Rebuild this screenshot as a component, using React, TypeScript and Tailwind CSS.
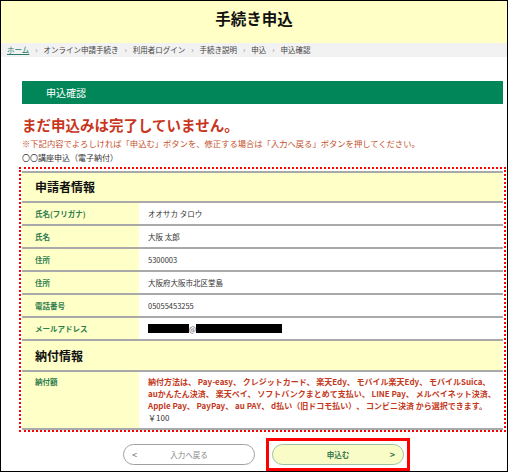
const rows = [
  { label: "氏名(フリガナ)", value: "オオサカ タロウ" },
  { label: "氏名", value: "大阪 太郎" },
  { label: "住所", value: "5300003" },
  { label: "住所", value: "大阪府大阪市北区堂島" },
  { label: "電話番号", value: "05055453255" },
];

const crumbs = ["オンライン申請手続き", "利用者ログイン", "手続き説明", "申込", "申込確認"];

function Row({ label, children }: { label: string; children: React.ReactNode }) {
  return (
    <div className="grid grid-cols-[117px_1fr] border-t-2 border-[#a9a9a9] h-[23px]">
      <div className="bg-[#ffffc8] pl-[13px] flex items-center text-[7.5px] font-bold text-[#2e7d4f]">
        {label}
      </div>
      <div className="bg-white pl-[9px] flex items-center text-[7.5px] text-[#333]">{children}</div>
    </div>
  );
}

export default function App() {
  return (
    <div className="w-[508px] h-[472px] border border-black bg-white overflow-hidden font-['Noto_Sans_CJK_JP',sans-serif]">
      {/* Header */}
      <div className="h-[42px] bg-[#ffffc6] flex justify-center pt-[6px]">
        <h1 className="text-[15.5px] font-bold text-[#111] leading-[22px]">手続き申込</h1>
      </div>

      {/* Breadcrumb */}
      <div className="h-[14px] bg-[#f2f2f2] flex items-center pl-[6px] text-[7.5px] text-[#444] leading-none">
        <span className="text-[#2a7a6a] underline">ホーム</span>
        {crumbs.map((c) => (
          <span key={c} className="flex items-center">
            <span className="mx-[6px] text-[#888]">›</span>
            {c}
          </span>
        ))}
      </div>

      <div className="ml-[21px] mr-[4px]">
        {/* Section bar */}
        <div className="mt-[24px] h-[23px] bg-[#008658] flex items-center pl-[24px] text-white text-[10px]">
          申込確認
        </div>

        <h2 className="mt-[11px] h-[20px] leading-[20px] text-[14.5px] font-bold text-[#c8361c]">
          まだ申込みは完了していません。
        </h2>
        <p className="mt-[2px] leading-[12px] text-[8.3px] text-[#c4502c] whitespace-nowrap">
          ※下記内容でよろしければ「申込む」ボタンを、修正する場合は「入力へ戻る」ボタンを押してください。
        </p>
        <p className="mt-[3px] leading-[12px] text-[8px] text-[#333]">〇〇講座申込（電子納付）</p>

        {/* Dotted box */}
        <div className="mt-[3px] -mx-[3px] border-2 border-dotted border-[#ff0000] px-[1px] pt-[2px]">
          <div className="border-t-2 border-[#a9a9a9] h-[30px] bg-[#ffffc8] flex items-center pl-[13px] text-[12px] font-bold text-[#111]">
            申請者情報
          </div>
          {rows.map((r, i) => (
            <Row key={i} label={r.label}>
              {r.value}
            </Row>
          ))}
          <Row label="メールアドレス">
            <span className="inline-block w-[41px] h-[9px] bg-black" />
            <span className="text-[#555]">@</span>
            <span className="inline-block w-[86px] h-[9px] bg-black" />
          </Row>

          <div className="border-t-2 border-[#a9a9a9] h-[31px] bg-[#ffffc8] flex items-center pl-[13px] text-[12px] font-bold text-[#111]">
            納付情報
          </div>
          <div className="grid grid-cols-[117px_1fr] border-t-2 border-b-2 border-[#a9a9a9]">
            <div className="bg-[#ffffc8] pl-[13px] pt-[4px] text-[7.5px] leading-[12px] font-bold text-[#2e7d4f]">
              納付額
            </div>
            <div className="bg-white pl-[9px] pt-[4px] pb-[4px] text-[8px] leading-[12px] whitespace-nowrap">
              <div className="font-bold text-[#c3391c]">
                納付方法は、 Pay-easy、 クレジットカード、 楽天Edy、 モバイル楽天Edy、 モバイルSuica、
                <br />
                auかんたん決済、 楽天ペイ、 ソフトバンクまとめて支払い、 LINE Pay、 メルペイネット決済、
                <br />
                Apple Pay、 PayPay、 au PAY、 d払い（旧ドコモ払い）、 コンビニ決済 から選択できます。
              </div>
              <div className="text-[#333]">￥100</div>
            </div>
          </div>
        </div>

        {/* Buttons */}
        <div className="mt-[6px] flex items-center pl-[101px] gap-[11px]">
          <button className="w-[132px] h-[21px] rounded-full border border-[#a0a0a0] bg-white relative flex items-center justify-center text-[7.5px] text-[#888]">
            <span className="absolute left-[8px] text-[9px] text-[#666]">&lt;</span>
            入力へ戻る
          </button>
          <div className="border-[3px] border-[#ff0000] p-[3px]">
            <button className="w-[132px] h-[21px] rounded-full border border-[#9cc49c] bg-[#fafcc8] relative flex items-center justify-center text-[7.5px] font-bold text-[#3a7a50]">
              申込む
              <span className="absolute right-[8px] text-[9px] text-[#3a7a50]">&gt;</span>
            </button>
          </div>
        </div>
      </div>
    </div>
  );
}
